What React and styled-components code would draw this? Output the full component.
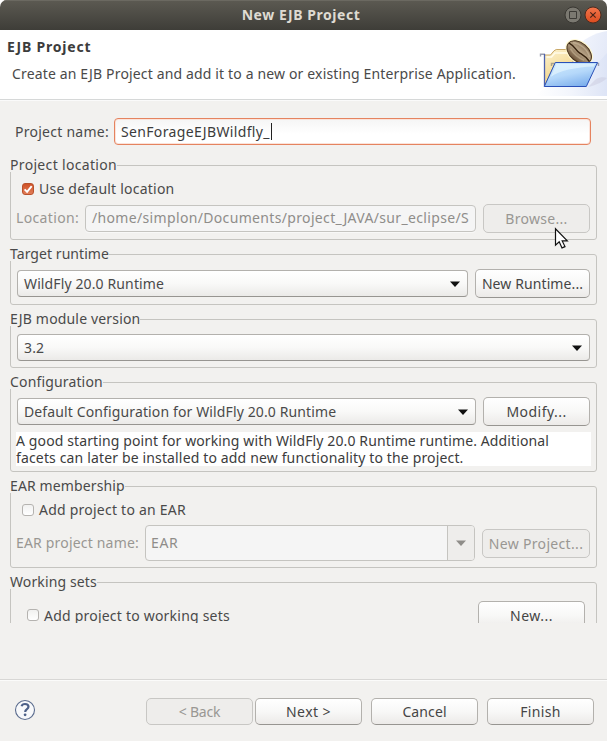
import React from 'react';
import styled, { createGlobalStyle, css } from 'styled-components';

const GlobalStyle = createGlobalStyle`
  * { box-sizing: border-box; }
  body { margin: 0; background: #fff; font-family: "Noto Sans", sans-serif; font-size: 14px; color: #4a4a4a; }
`;

const Window = styled.div`
  width: 607px;
  height: 741px;
  display: flex;
  flex-direction: column;
  background: #f2f1ef;
  border-radius: 7px 7px 0 0;
  overflow: hidden;
`;

const TitleBar = styled.header`
  height: 30px;
  flex: none;
  display: grid;
  grid-template-columns: 1fr auto 1fr;
  align-items: center;
  padding: 0 5px 0 0;
  background: linear-gradient(#5c5a52, #3e3d38);
  box-shadow: inset 0 1px #6b6961;
`;

const TitleText = styled.h1`
  grid-column: 2;
  margin: 0;
  font-size: 14px;
  line-height: 30px;
  letter-spacing: 0.534px;
  color: #dfdbd2;
`;

const WindowControls = styled.div`
  display: flex;
  justify-content: flex-end;
  gap: 2px;
`;

const Banner = styled.section`
  height: 71px;
  flex: none;
  display: flex;
  justify-content: space-between;
  background: #fff;
  border-bottom: 1px solid #fafafa;
  box-shadow: inset 0 -1px #d6d8d8;
`;

const BannerCopy = styled.div`
  padding: 7px 0 0 7px;
`;

const BannerHeading = styled.h2`
  margin: 0;
  font-size: 14px;
  line-height: 20px;
  letter-spacing: 0.8px;
  color: #3c3c3c;
`;

const BannerMessage = styled.p`
  margin: 7px 0 0 5px;
  line-height: 20px;
  letter-spacing: 0.149px;
  white-space: nowrap;
`;

const FormArea = styled.main`
  height: 522px;
  flex: none;
  overflow: hidden;
  padding: 17px 10px 0;
`;

const Label = styled.label`
  flex: none;
  line-height: 20px;
  padding-bottom: ${(p) => p.$lift || 0}px;
  white-space: nowrap;
  letter-spacing: ${(p) => p.$tracking}px;
  width: ${(p) => (p.$width ? `${p.$width}px` : 'auto')};
  color: ${(p) => (p.$disabled ? '#999793' : 'inherit')};
`;

const Row = styled.div`
  display: flex;
  align-items: center;
  height: ${(p) => p.$height}px;
  margin-top: ${(p) => p.$top || 0}px;
  padding: 0 ${(p) => p.$right ?? 6}px 0 ${(p) => p.$left ?? 6}px;
  gap: ${(p) => p.$gap ?? 7}px;
`;

const CheckOption = styled.div`
  display: flex;
  align-items: center;
  flex: 1;
  gap: 5px;
`;

const NameRow = styled.div`
  display: flex;
  align-items: center;
  height: 27px;
  padding: 0 6px 0 5px;
`;

const fieldBox = css`
  display: flex;
  align-items: center;
  flex: 1;
  min-width: 0;
  height: 27px;
  border-radius: 4px;
  white-space: nowrap;
  overflow: hidden;
  letter-spacing: ${(p) => p.$tracking || 0}px;
`;

const TextField = styled.div`
  ${fieldBox}
  padding: 0 6px ${(p) => (p.$disabled ? 2 : 0)}px;
  border: 1px solid ${(p) => (p.$focused ? '#e5835f' : '#c5c4c0')};
  background: ${(p) => (p.$focused ? 'linear-gradient(#f5f5f5, #fff 60%)' : '#f5f5f5')};
  box-shadow: ${(p) => (p.$focused ? 'inset 0 0 0 1px #fbe3da' : '0 1px #f8f8f7')};
  color: ${(p) => (p.$disabled ? '#8f8d8a' : '#3c3c3c')};
`;

const Caret = styled.span`
  width: 1px;
  height: 17px;
  margin-left: 1px;
  background: #222;
`;

const Group = styled.section`
  height: ${(p) => p.$height}px;
  margin-top: ${(p) => p.$top || 14}px;
  border: 1px solid #c5c4c0;
  border-radius: 3px;
`;

const Legend = styled.div`
  width: max-content;
  height: 14px;
  line-height: 14px;
  margin: -8px 0 0 -1px;
  background: #f2f1ef;
  letter-spacing: ${(p) => p.$tracking}px;
`;

const Combo = styled.div`
  ${fieldBox}
  justify-content: space-between;
  padding: 0 7px 0 6px;
  border: 1px solid #b3b1ad;
  border-bottom-color: #979591;
  background: linear-gradient(#fff, #f9f9f8 50%, #ebeae8);
`;

const EditableCombo = styled.div`
  ${fieldBox}
  height: 36px;
  padding-left: 5px;
  justify-content: space-between;
  border: 1px solid #c5c4c0;
  background: #f5f5f5;
  color: #8f8d8a;
`;

const ComboValue = styled.span`
  padding-bottom: 2px;
`;

const ComboToggle = styled.span`
  width: 27px;
  height: 100%;
  display: flex;
  align-items: center;
  justify-content: center;
  border-left: 1px solid #c5c4c0;
  background: #eeedeb;
`;

const Button = styled.button`
  flex: none;
  width: ${(p) => p.$width || 107}px;
  height: ${(p) => p.$height || 29}px;
  padding: 0;
  border: 1px solid #b3b1ad;
  border-bottom-color: #979591;
  border-radius: 5px;
  background: linear-gradient(#fff, #f8f8f7 50%, #eceae8);
  font: inherit;
  color: #454545;
  letter-spacing: ${(p) => p.$tracking}px;
  white-space: nowrap;
  &:disabled {
    color: #999793;
    border-color: #c8c7c4;
    background: #eeedeb;
  }
`;

const CheckBox = styled.span`
  width: 12px;
  height: 12px;
  margin-top: -1px;
  flex: none;
  display: flex;
  border: 1px solid ${(p) => (p.$checked ? '#b9512c' : '#b5b3b0')};
  border-radius: 3px;
  background: ${(p) => (p.$checked ? 'linear-gradient(#cf5227, #e17d58)' : 'linear-gradient(#f1f1f0, #fff)')};
  svg { margin: -1px; }
`;

const Description = styled.p`
  margin: 6px 5px 0;
  height: 34px;
  line-height: 17px;
  background: #fff;
  color: #3c3c3c;
  white-space: nowrap;
`;

const Line = styled.span`
  display: block;
  letter-spacing: ${(p) => p.$tracking}px;
`;

const Footer = styled.footer`
  flex: 1;
  margin-top: 56px;
  display: flex;
  align-items: center;
  justify-content: space-between;
  padding: 0 13px 0 14px;
  border-top: 1px solid #d8d7d5;
  box-shadow: inset 0 1px #fbfbfa;
`;

const HelpButton = styled.span`
  display: flex;
  padding-bottom: 1px;
`;

const Actions = styled.div`
  display: flex;
  gap: 9px;
  padding-top: 2px;
`;

const StepButtons = styled.div`
  display: flex;
  gap: 2px;
`;

const Pointer = styled.svg`
  position: absolute;
  left: 554px;
  top: 227px;
  pointer-events: none;
`;

const Arrow = ({ color = '#111' }) => (
  <svg width="10" height="6" viewBox="0 0 10 6"><path d="M0 .5h10L5 6z" fill={color} /></svg>
);

const Check = () => (
  <svg width="12" height="12" viewBox="0 0 12 12"><path d="M2.6 6.3l2.5 2.6L9.7 3.2" fill="none" stroke="#fff" strokeWidth="1.9" /></svg>
);

const MaximizeIcon = () => (
  <svg width="18" height="18" viewBox="0 0 18 18">
    <circle cx="9" cy="9" r="8" fill="#7b7971" stroke="#393732" />
    <path d="M5.5 5.5h7v7h-7z" fill="none" stroke="#3c3b36" />
  </svg>
);

const CloseIcon = () => (
  <svg width="18" height="18" viewBox="0 0 18 18">
    <defs><linearGradient id="close" x2="0" y2="1"><stop stopColor="#f4764c" /><stop offset="1" stopColor="#dc4c1f" /></linearGradient></defs>
    <circle cx="9" cy="9" r="8" fill="url(#close)" stroke="#4b2c20" />
    <path d="M6.3 6.3l5.4 5.4m0-5.4l-5.4 5.4" stroke="#4b2418" strokeWidth="1.2" />
  </svg>
);

const ProjectArt = () => (
  <svg width="75" height="66" viewBox="0 0 75 66">
    <defs>
      <linearGradient id="sky" x1="0" x2="1" y1="0" y2=".3"><stop stopColor="#f8faff" /><stop offset="1" stopColor="#e5eaf8" /></linearGradient>
      <linearGradient id="floor"><stop stopColor="#fff" /><stop offset=".5" stopColor="#f2f5fc" /><stop offset="1" stopColor="#dde4f6" /></linearGradient>
      <linearGradient id="front" x1=".2" x2=".7" y2="1"><stop stopColor="#cdeafd" /><stop offset=".5" stopColor="#b5d8fa" /><stop offset="1" stopColor="#7baeec" /></linearGradient>
      <linearGradient id="back" x2=".4" y2="1"><stop stopColor="#fdf3cf" /><stop offset="1" stopColor="#f0d080" /></linearGradient>
      <linearGradient id="bean" x2="0" y2="1"><stop stopColor="#8a7358" /><stop offset=".45" stopColor="#b7a386" /><stop offset="1" stopColor="#6d543a" /></linearGradient>
    </defs>
    <path d="M75 1C62 3 51 9 44 18L30 58 75 48z" fill="url(#sky)" />
    <path d="M4 66c5-8 17-12 31-13 18-2 28-18 40-30v43z" fill="url(#floor)" />
    <path d="M56 57l8-8c4-2 8-2 11-1-3 3-10 7-19 9z" fill="#c8c7dc" opacity=".45" />
    <path d="M8.5 26.5v-2.2H13M62 33.5h4.5v2.5" fill="none" stroke="#9a9eb0" strokeWidth="1.4" />
    <path d="M12.5 56V25h6l3.5-4.2 2.2-1.3h13.3l3.5 3V33H23z" fill="url(#back)" stroke="#c9a868" />
    <path d="M14.5 27h5l3.5-4h12" fill="none" stroke="#fffbe9" strokeWidth="1.6" />
    <path d="M12.5 24v32.5" stroke="#4d62ae" strokeWidth="1.3" />
    <g transform="translate(47.2 22.2) rotate(40)">
      <ellipse rx="15.6" ry="10.8" fill="#fff7ce" />
      <ellipse rx="14" ry="9.2" fill="url(#bean)" stroke="#49341f" strokeWidth="1" />
      <path d="M-11-3.5C-5-7.5 5-7.5 11-3" fill="none" stroke="#cdbd9f" strokeWidth="1.6" opacity=".6" />
      <path d="M-13.6-.5C-7-2-4 1 1 .3S8-1 13.5 .5" fill="none" stroke="#36230f" strokeWidth="1.5" />
      <path d="M-9 3C-4 5 4 5 9 3" fill="none" stroke="#c2af90" strokeWidth="1.6" opacity=".6" />
    </g>
    <path d="M19.5 36v-2.5h4" fill="none" stroke="#a9a18c" strokeWidth="1.4" />
    <path d="M23.3 32.5h42.2L54.3 56.5h-42z" fill="url(#front)" stroke="#2a50b8" strokeWidth="1" />
    <path d="M24.6 34h38.6l-1.4 2.6C44 37 27 41 18.6 47z" fill="#e9f8ff" opacity=".6" />
  </svg>
);

const HelpIcon = () => (
  <svg width="22" height="22" viewBox="0 0 22 22">
    <circle cx="11" cy="11" r="9.5" fill="#f8f9fb" stroke="#5b6c8e" strokeWidth="1.1" />
    <path d="M7.6 7.3c.4-1.5 1.7-2.3 3.4-2.3 2 0 3.5 1.1 3.5 2.8 0 1.4-.9 2-1.9 2.7-1 .6-1.4 1.1-1.4 2.5" fill="none" stroke="#4d6088" strokeWidth="2.2" />
    <circle cx="11.1" cy="15.8" r="1.4" fill="#4d6088" />
  </svg>
);

export default function App() {
  return (
    <>
      <GlobalStyle />
      <Window>
        <TitleBar>
          <TitleText>New EJB Project</TitleText>
          <WindowControls><MaximizeIcon /><CloseIcon /></WindowControls>
        </TitleBar>

        <Banner>
          <BannerCopy>
            <BannerHeading>EJB Project</BannerHeading>
            <BannerMessage>Create an EJB Project and add it to a new or existing Enterprise Application.</BannerMessage>
          </BannerCopy>
          <ProjectArt />
        </Banner>

        <FormArea>
          <NameRow>
            <Label $width={99} $tracking={0.262}>Project name:</Label>
            <TextField $focused $tracking={0.34}>SenForageEJBWildfly_<Caret /></TextField>
          </NameRow>

          <Group $height={75} $top={20}>
            <Legend $tracking={0.33}>Project location</Legend>
            <Row $height={20} $top={7} $left={11}>
              <CheckOption>
                <CheckBox $checked><Check /></CheckBox>
                <Label $tracking={0.22}>Use default location</Label>
              </CheckOption>
            </Row>
            <Row $height={29} $top={5} $left={5}>
              <Label $width={62} $tracking={0.354} $lift={2} $disabled>Location:</Label>
              <TextField $disabled $tracking={0.339}>/home/simplon/Documents/project_JAVA/sur_eclipse/S</TextField>
              <Button disabled $tracking={0.3}>Browse...</Button>
            </Row>
          </Group>

          <Group $height={51}>
            <Legend $tracking={0.061}>Target runtime</Legend>
            <Row $height={29} $top={8}>
              <Combo $tracking={0.121}>WildFly 20.0 Runtime<Arrow /></Combo>
              <Button $width={115} $tracking={0.1}>New Runtime...</Button>
            </Row>
          </Group>

          <Group $height={49}>
            <Legend $tracking={0.17}>EJB module version</Legend>
            <Row $height={27} $top={8}>
              <Combo $tracking={0.12}>3.2<Arrow /></Combo>
            </Row>
          </Group>

          <Group $height={90}>
            <Legend $tracking={0.154}>Configuration</Legend>
            <Row $height={29} $top={8}>
              <Combo $tracking={0.125}>Default Configuration for WildFly 20.0 Runtime<Arrow /></Combo>
              <Button $tracking={0.46}>Modify...</Button>
            </Row>
            <Description>
              <Line $tracking={0.118}>A good starting point for working with WildFly 20.0 Runtime runtime. Additional</Line>
              <Line $tracking={0.148}>facets can later be installed to add new functionality to the project.</Line>
            </Description>
          </Group>

          <Group $height={82}>
            <Legend $tracking={0.122}>EAR membership</Legend>
            <Row $height={20} $top={7} $left={11}>
              <CheckOption>
                <CheckBox />
                <Label $tracking={0.233}>Add project to an EAR</Label>
              </CheckOption>
            </Row>
            <Row $height={36} $top={5} $left={5}>
              <Label $width={122} $tracking={0.183} $disabled>EAR project name:</Label>
              <EditableCombo $tracking={0.635}>
                <ComboValue>EAR</ComboValue>
                <ComboToggle><Arrow color="#8f8d89" /></ComboToggle>
              </EditableCombo>
              <Button disabled $width={108} $tracking={0.33}>New Project...</Button>
            </Row>
          </Group>

          <Group $height={75}>
            <Legend $tracking={0.124}>Working sets</Legend>
            <Row $height={29} $top={12} $left={16} $right={11}>
              <CheckOption>
                <CheckBox />
                <Label $tracking={0.216}>Add project to working sets</Label>
              </CheckOption>
              <Button $tracking={0.5}>New...</Button>
            </Row>
          </Group>
        </FormArea>

        <Footer>
          <HelpButton><HelpIcon /></HelpButton>
          <Actions>
            <StepButtons>
              <Button disabled $height={27} $tracking={-0.2}>&lt; Back</Button>
              <Button $height={27} $tracking={0.429}>Next &gt;</Button>
            </StepButtons>
            <Button $height={27} $tracking={0.106}>Cancel</Button>
            <Button $height={27} $tracking={0.33}>Finish</Button>
          </Actions>
        </Footer>
      </Window>
      <Pointer width="16" height="24" viewBox="0 0 16 24">
        <path d="M1.5 1.8v16.4l3.7-3.4 2.8 6.1 3-1.3-2.8-5.7h5.1z" fill="#fff" stroke="#111" strokeWidth="1.2" />
      </Pointer>
    </>
  );
}
